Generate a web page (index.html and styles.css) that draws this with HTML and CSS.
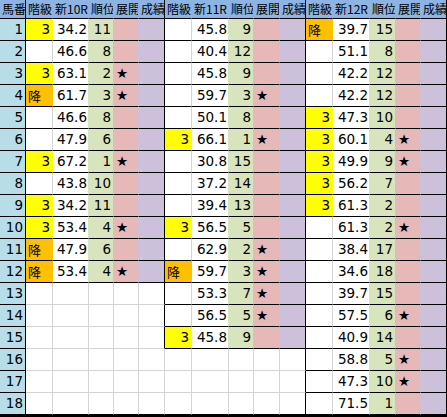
FILE: index.html
```html
<!DOCTYPE html>
<html lang="ja">
<head>
  <meta charset="UTF-8">
  <title>指数表</title>
  <link rel="stylesheet" href="styles.css">
</head>
<body>
  <table class="sheet">
    <colgroup>
      <col style="width:26px">
      <col style="width:27px"><col style="width:36px"><col style="width:25px"><col style="width:25px"><col style="width:26px">
      <col style="width:27px"><col style="width:37px"><col style="width:25px"><col style="width:26px"><col style="width:26px">
      <col style="width:27px"><col style="width:37px"><col style="width:26px"><col style="width:25px"><col style="width:26px">
    </colgroup>
    <thead>
      <tr>
        <th class="num">馬番</th>
        <th>階級</th><th>新10R</th><th>順位</th><th>展開</th><th class="end">成績</th>
        <th>階級</th><th>新11R</th><th>順位</th><th>展開</th><th class="end">成績</th>
        <th>階級</th><th>新12R</th><th>順位</th><th>展開</th><th class="end">成績</th>
      </tr>
    </thead>
    <tbody>
      <tr>
        <td class="no">1</td>
        <td class="k y">3</td><td class="v">34.2</td><td class="r">11</td><td class="t"></td><td class="s"></td>
        <td class="k"></td><td class="v">45.8</td><td class="r">9</td><td class="t"></td><td class="s"></td>
        <td class="k o">降</td><td class="v">39.7</td><td class="r">15</td><td class="t"></td><td class="s"></td>
      </tr>
      <tr>
        <td class="no">2</td>
        <td class="k"></td><td class="v">46.6</td><td class="r">8</td><td class="t"></td><td class="s"></td>
        <td class="k"></td><td class="v">40.4</td><td class="r">12</td><td class="t"></td><td class="s"></td>
        <td class="k"></td><td class="v">51.1</td><td class="r">8</td><td class="t"></td><td class="s"></td>
      </tr>
      <tr>
        <td class="no">3</td>
        <td class="k y">3</td><td class="v">63.1</td><td class="r">2</td><td class="t">★</td><td class="s"></td>
        <td class="k"></td><td class="v">45.8</td><td class="r">9</td><td class="t"></td><td class="s"></td>
        <td class="k"></td><td class="v">42.2</td><td class="r">12</td><td class="t"></td><td class="s"></td>
      </tr>
      <tr>
        <td class="no">4</td>
        <td class="k o">降</td><td class="v">61.7</td><td class="r">3</td><td class="t">★</td><td class="s"></td>
        <td class="k"></td><td class="v">59.7</td><td class="r">3</td><td class="t">★</td><td class="s"></td>
        <td class="k"></td><td class="v">42.2</td><td class="r">12</td><td class="t"></td><td class="s"></td>
      </tr>
      <tr>
        <td class="no">5</td>
        <td class="k"></td><td class="v">46.6</td><td class="r">8</td><td class="t"></td><td class="s"></td>
        <td class="k"></td><td class="v">50.1</td><td class="r">8</td><td class="t"></td><td class="s"></td>
        <td class="k y">3</td><td class="v">47.3</td><td class="r">10</td><td class="t"></td><td class="s"></td>
      </tr>
      <tr>
        <td class="no">6</td>
        <td class="k"></td><td class="v">47.9</td><td class="r">6</td><td class="t"></td><td class="s"></td>
        <td class="k y">3</td><td class="v">66.1</td><td class="r">1</td><td class="t">★</td><td class="s"></td>
        <td class="k y">3</td><td class="v">60.1</td><td class="r">4</td><td class="t">★</td><td class="s"></td>
      </tr>
      <tr>
        <td class="no">7</td>
        <td class="k y">3</td><td class="v">67.2</td><td class="r">1</td><td class="t">★</td><td class="s"></td>
        <td class="k"></td><td class="v">30.8</td><td class="r">15</td><td class="t"></td><td class="s"></td>
        <td class="k y">3</td><td class="v">49.9</td><td class="r">9</td><td class="t">★</td><td class="s"></td>
      </tr>
      <tr>
        <td class="no">8</td>
        <td class="k"></td><td class="v">43.8</td><td class="r">10</td><td class="t"></td><td class="s"></td>
        <td class="k"></td><td class="v">37.2</td><td class="r">14</td><td class="t"></td><td class="s"></td>
        <td class="k y">3</td><td class="v">56.2</td><td class="r">7</td><td class="t"></td><td class="s"></td>
      </tr>
      <tr>
        <td class="no">9</td>
        <td class="k y">3</td><td class="v">34.2</td><td class="r">11</td><td class="t"></td><td class="s"></td>
        <td class="k"></td><td class="v">39.4</td><td class="r">13</td><td class="t"></td><td class="s"></td>
        <td class="k y">3</td><td class="v">61.3</td><td class="r">2</td><td class="t"></td><td class="s"></td>
      </tr>
      <tr>
        <td class="no">10</td>
        <td class="k y">3</td><td class="v">53.4</td><td class="r">4</td><td class="t">★</td><td class="s"></td>
        <td class="k y">3</td><td class="v">56.5</td><td class="r">5</td><td class="t"></td><td class="s"></td>
        <td class="k"></td><td class="v">61.3</td><td class="r">2</td><td class="t">★</td><td class="s"></td>
      </tr>
      <tr>
        <td class="no">11</td>
        <td class="k o">降</td><td class="v">47.9</td><td class="r">6</td><td class="t"></td><td class="s"></td>
        <td class="k"></td><td class="v">62.9</td><td class="r">2</td><td class="t">★</td><td class="s"></td>
        <td class="k"></td><td class="v">38.4</td><td class="r">17</td><td class="t"></td><td class="s"></td>
      </tr>
      <tr>
        <td class="no">12</td>
        <td class="k o">降</td><td class="v">53.4</td><td class="r">4</td><td class="t">★</td><td class="s"></td>
        <td class="k o">降</td><td class="v">59.7</td><td class="r">3</td><td class="t">★</td><td class="s"></td>
        <td class="k"></td><td class="v">34.6</td><td class="r">18</td><td class="t"></td><td class="s"></td>
      </tr>
      <tr>
        <td class="no">13</td>
        <td></td><td></td><td></td><td></td><td class="edge"></td>
        <td class="k"></td><td class="v">53.3</td><td class="r">7</td><td class="t">★</td><td class="s"></td>
        <td class="k"></td><td class="v">39.7</td><td class="r">15</td><td class="t"></td><td class="s"></td>
      </tr>
      <tr>
        <td class="no">14</td>
        <td></td><td></td><td></td><td></td><td class="edge"></td>
        <td class="k"></td><td class="v">56.5</td><td class="r">5</td><td class="t">★</td><td class="s"></td>
        <td class="k"></td><td class="v">57.5</td><td class="r">6</td><td class="t">★</td><td class="s"></td>
      </tr>
      <tr>
        <td class="no">15</td>
        <td></td><td></td><td></td><td></td><td class="edge"></td>
        <td class="k y">3</td><td class="v">45.8</td><td class="r">9</td><td class="t"></td><td class="s"></td>
        <td class="k"></td><td class="v">40.9</td><td class="r">14</td><td class="t"></td><td class="s"></td>
      </tr>
      <tr>
        <td class="no">16</td>
        <td></td><td></td><td></td><td></td><td></td>
        <td></td><td></td><td></td><td></td><td class="edge"></td>
        <td class="k"></td><td class="v">58.8</td><td class="r">5</td><td class="t">★</td><td class="s"></td>
      </tr>
      <tr>
        <td class="no">17</td>
        <td></td><td></td><td></td><td></td><td></td>
        <td></td><td></td><td></td><td></td><td class="edge"></td>
        <td class="k"></td><td class="v">47.3</td><td class="r">10</td><td class="t">★</td><td class="s"></td>
      </tr>
      <tr class="last">
        <td class="no">18</td>
        <td></td><td></td><td></td><td></td><td></td>
        <td></td><td></td><td></td><td></td><td class="edge"></td>
        <td class="k"></td><td class="v">71.5</td><td class="r">1</td><td class="t"></td><td class="s"></td>
      </tr>
    </tbody>
  </table>
</body>
</html>
```

FILE: styles.css
```css
body {
  margin: 0;
  background-color: #fff;
  font-family: "DejaVu Sans", "Noto Sans CJK JP", sans-serif;
  color: #000;
}
.sheet {
  table-layout: fixed;
  width: 447px;
  border-collapse: separate;
  border-spacing: 0;
  border-bottom: 2px solid #000;
}
th {
  height: 18px;
  padding: 0 0 0 2px;
  background-color: #8db4e2;
  border-right: 1px solid #8db4e2;
  border-bottom: 1px solid #000;
  font-family: "Noto Sans CJK JP", sans-serif;
  font-size: 12px;
  font-weight: normal;
  line-height: 18px;
  text-align: left;
  white-space: nowrap;
  overflow: hidden;
}
th.num,
th.end {
  border-right-color: #000;
}
td {
  height: 21px;
  padding: 0 2px;
  border-right: 1px solid #d4d4d4;
  border-bottom: 1px solid #d4d4d4;
  font-size: 13.5px;
  line-height: 21px;
  white-space: nowrap;
  overflow: hidden;
}
.no {
  background-color: #b7dee8;
  border-right-color: #000;
  border-bottom-color: #000;
  text-align: right;
}
.k, .v, .r, .t, .s {
  border-bottom-color: #000;
}
.k {
  text-align: right;
}
.k.y {
  background-color: #ffff00;
  border-right-color: #ffff00;
}
.k.o {
  background-color: #ffc000;
  border-right-color: #ffc000;
  text-align: left;
  font-family: "Noto Sans CJK JP", sans-serif;
  font-size: 13px;
}
.v {
  text-align: right;
  padding-right: 1px;
  border-right-color: #d8e4bc;
}
.r {
  background-color: #d8e4bc;
  border-right-color: #e6b8b7;
  text-align: right;
}
.t {
  background-color: #e6b8b7;
  border-right-color: #ccc0da;
  text-align: left;
}
.s {
  background-color: #ccc0da;
  border-right-color: #000;
}
.edge {
  border-right-color: #000;
}
.last td {
  border-bottom-color: #000;
}
```
